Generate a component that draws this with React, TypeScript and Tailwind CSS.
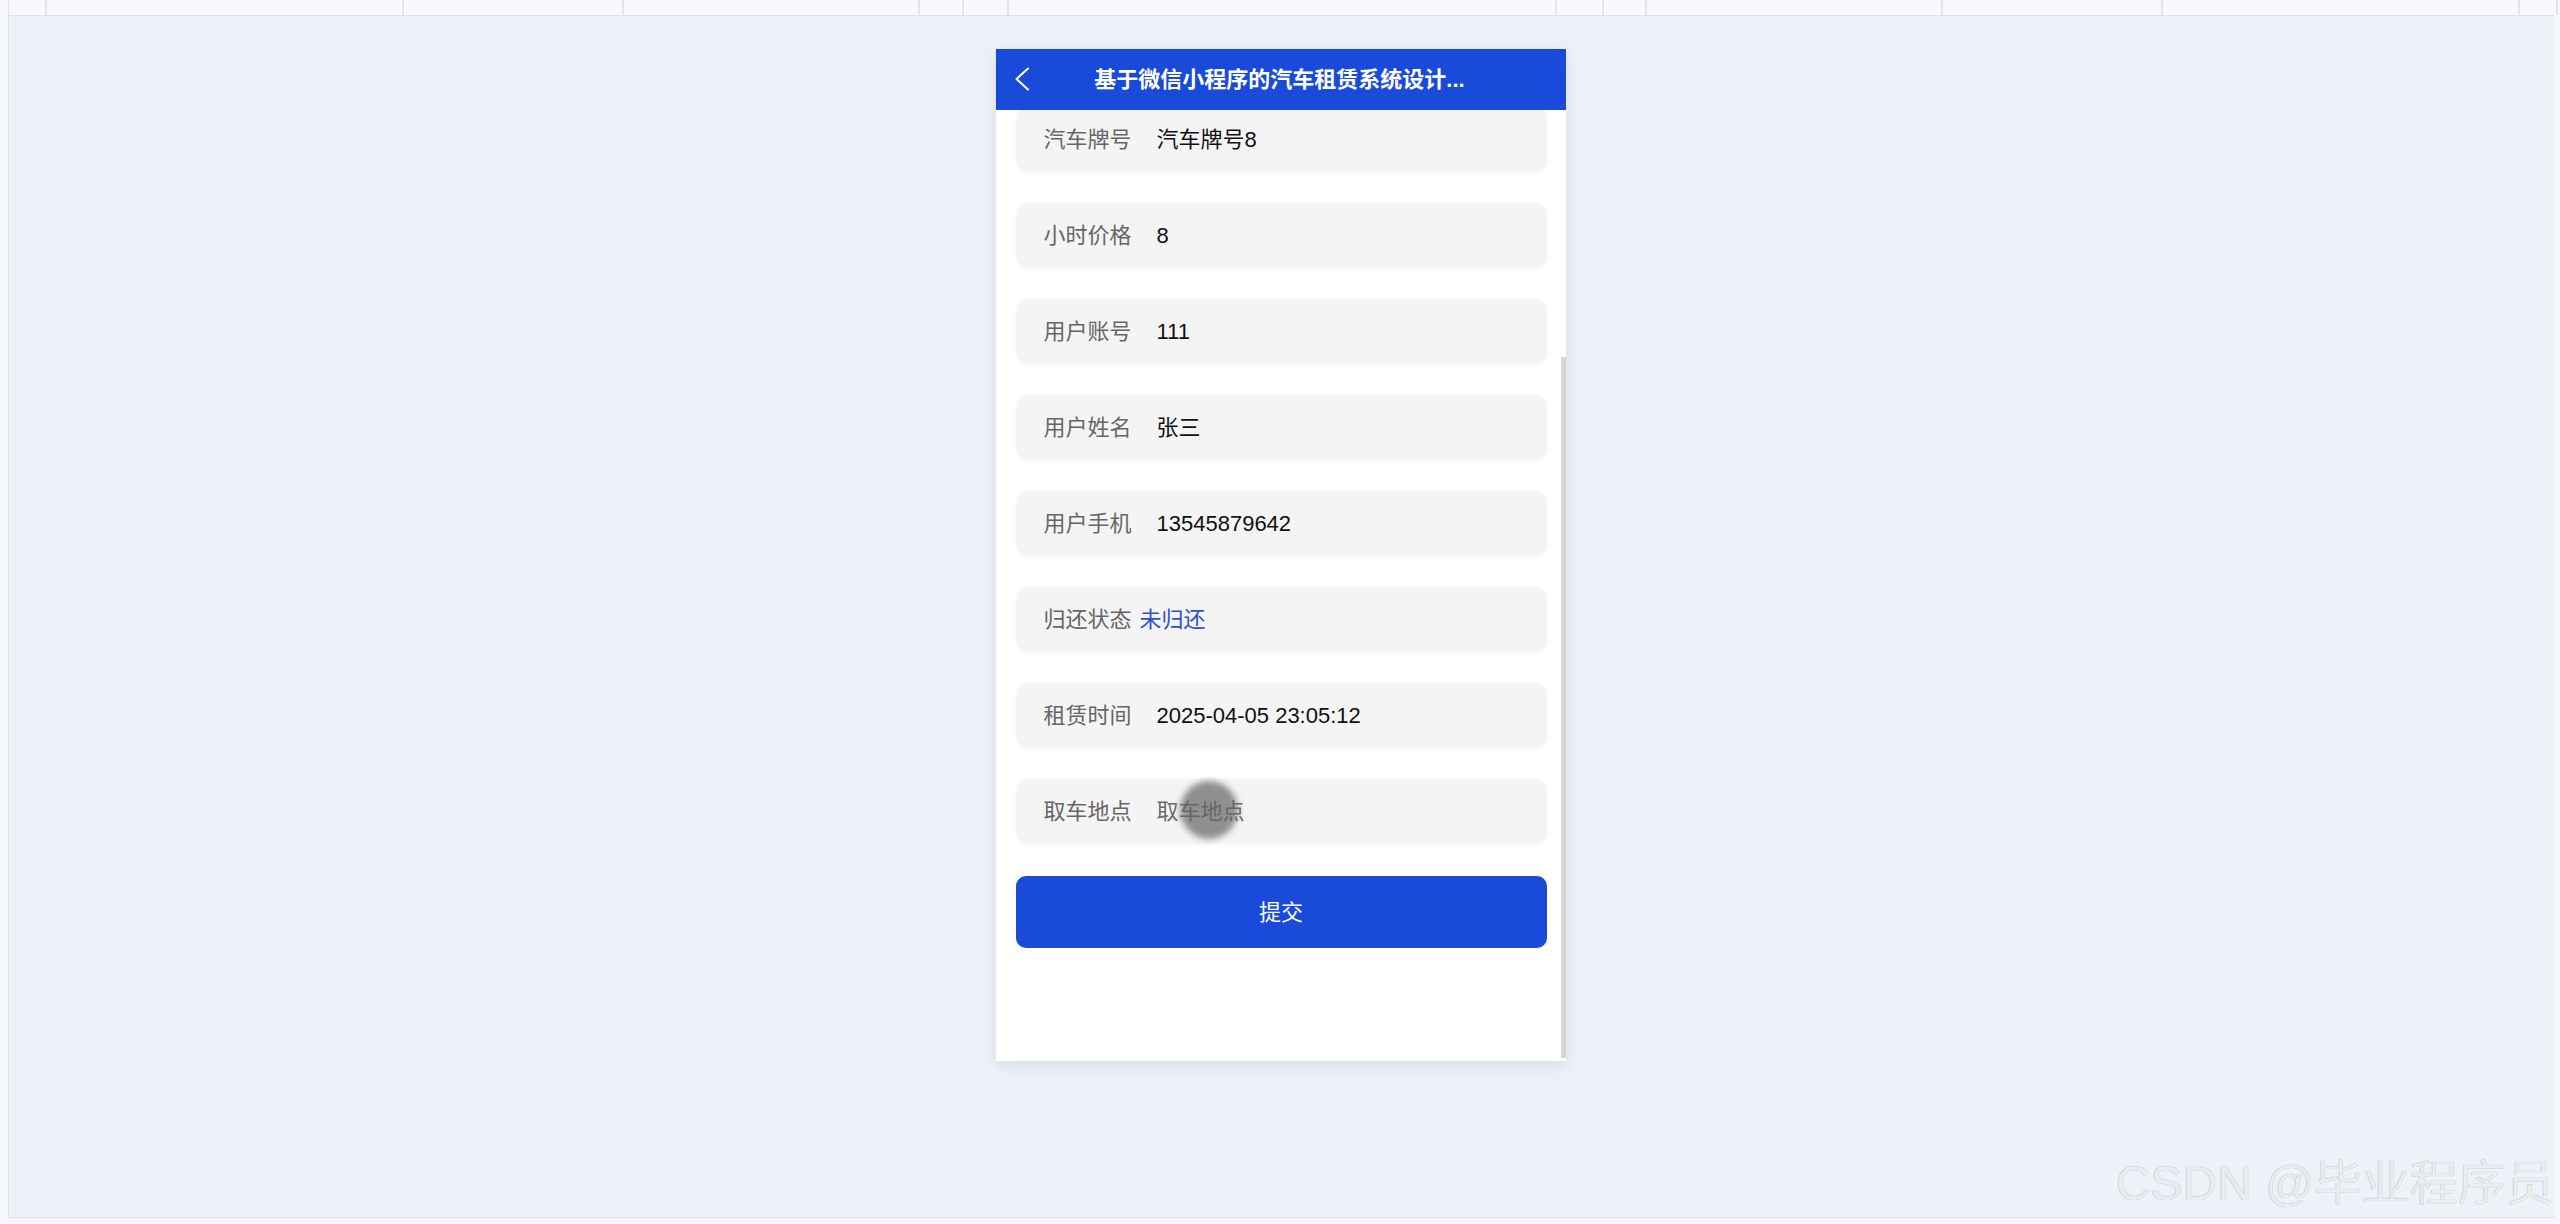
import React from "react";

const topCols = [38, 357, 220, 296, 44, 45, 548, 47, 43, 296, 220, 357, 38];

type Field = { label: string; value: string; tone?: "status" | "placeholder" };

const fields: Field[] = [
  { label: "汽车牌号", value: "汽车牌号8" },
  { label: "小时价格", value: "8" },
  { label: "用户账号", value: "111" },
  { label: "用户姓名", value: "张三" },
  { label: "用户手机", value: "13545879642" },
  { label: "归还状态", value: "未归还", tone: "status" },
  { label: "租赁时间", value: "2025-04-05 23:05:12" },
  { label: "取车地点", value: "取车地点", tone: "placeholder" },
];

function FieldRow({ f }: { f: Field }) {
  const valueClass =
    f.tone === "status"
      ? "ml-[8px] text-[#2f4fcc]"
      : f.tone === "placeholder"
        ? "ml-[25px] text-[#6b6b6b]"
        : "ml-[25px] text-[#111111]";
  return (
    <div className="flex h-[65px] items-center rounded-[12px] bg-[#f4f4f5] pl-[28px] shadow-[0_1px_4px_rgba(0,0,0,0.03)]">
      <span className="w-[88px] shrink-0 whitespace-nowrap text-[#666666]">{f.label}</span>
      <span className={valueClass + " whitespace-nowrap"}>{f.value}</span>
    </div>
  );
}

export default function App() {
  return (
    <div
      className="relative flex h-[1224px] w-[2560px] flex-col overflow-hidden bg-[#f5f7fa]"
      style={{ fontFamily: '"Liberation Sans", "Noto Sans CJK SC", sans-serif' }}
    >
      <div className="ml-[8px] mr-[5px] flex h-[1218px] flex-col border-b border-l border-[#dfe3ea] bg-[#edf1f8]">
        {/* table header strip */}
        <div className="flex h-[16px] shrink-0 border-b border-[#dde1e8] bg-[#f7f9fd]">
          {topCols.map((w, i) => (
            <div
              key={i}
              className="h-full shrink-0 border-r-2 border-[#e1e5ec]"
              style={{ width: w }}
            />
          ))}
        </div>

        {/* phone preview */}
        <div className="mt-[33px] flex justify-center pr-[3px]">
          <div className="flex h-[1012px] w-[570px] flex-col bg-white shadow-[0_4px_14px_rgba(120,130,150,0.18)]">
            <div className="relative flex h-[61px] shrink-0 items-center justify-center bg-[#1a4ad9]">
              <svg
                className="absolute left-[18px] top-[18px]"
                width="16"
                height="24"
                viewBox="0 0 16 24"
                fill="none"
              >
                <path d="M14 1.5 L2.5 12 L14 22.5" stroke="white" strokeWidth="2" strokeLinecap="round" strokeLinejoin="round" />
              </svg>
              <span className="pr-[2px] text-[22px] font-bold text-white">基于微信小程序的汽车租赁系统设计...</span>
            </div>

            <div className="relative flex-1 overflow-hidden">
              <div className="-mt-[3px] flex flex-col gap-[31px] pl-[20px] pr-[19px] text-[22px]">
                {fields.map((f) => (
                  <FieldRow key={f.label} f={f} />
                ))}
                <button className="mt-[1px] flex h-[72px] items-center justify-center rounded-[10px] bg-[#1a4ad9] text-[22px] text-white">
                  提交
                </button>
              </div>

              {/* scrollbar thumb */}
              <div className="absolute bottom-[3px] right-0 top-[247px] w-[5px] bg-[#d6d6d6]" />

              {/* touch indicator */}
              <div className="absolute left-[184px] top-[671px] h-[58px] w-[58px] rounded-full bg-[rgba(100,100,100,0.7)] blur-[3px]" />
            </div>
          </div>
        </div>
      </div>

      <div
        className="absolute bottom-[16px] right-[6px] whitespace-nowrap text-[48px] leading-none text-[#e9ecf1]"
        style={{ textShadow: "0 0 1px #8e949e, 1px 1px 0 #ffffff" }}
      >
        CSDN @毕业程序员
      </div>
    </div>
  );
}
